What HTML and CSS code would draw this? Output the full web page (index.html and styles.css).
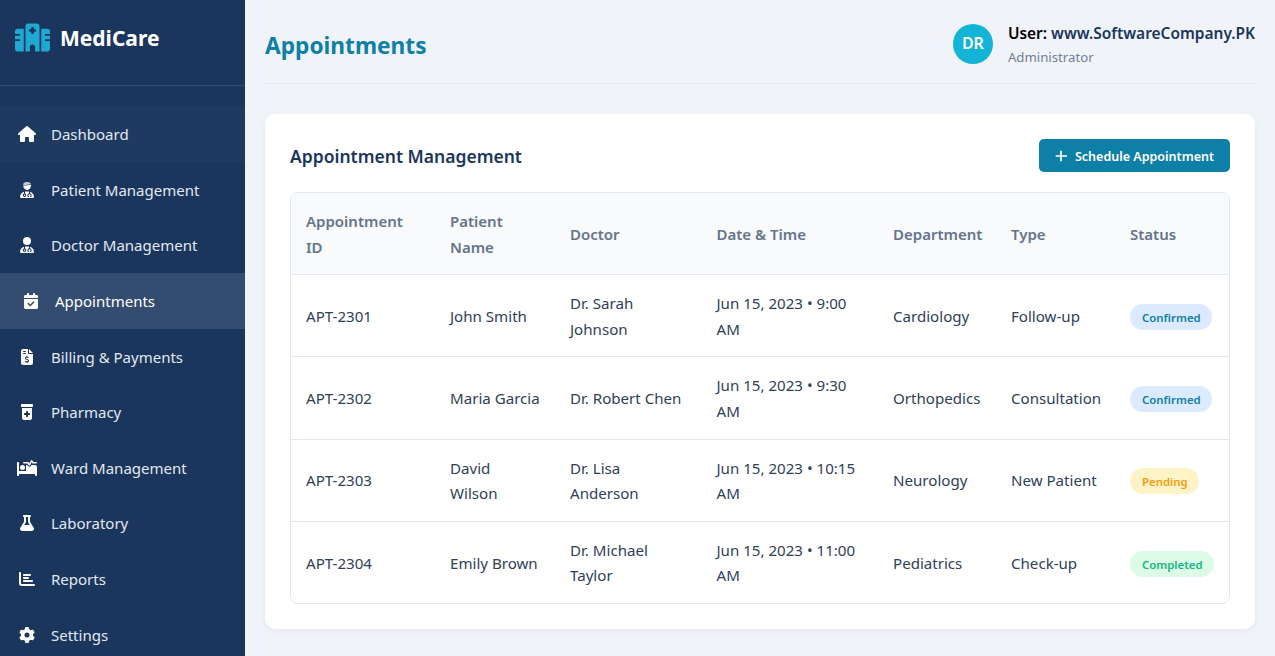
FILE: index.html
```html
<!DOCTYPE html>
<html lang="en">
<head>
<meta charset="utf-8">
<title>MediCare - Appointments</title>
<link rel="stylesheet" href="styles.css">
</head>
<body>
<div class="layout">
<aside class="sidebar">
  <div class="brand">
    <svg class="brand-icon" viewBox="0 0 640 512"><path d="M192 48c0-26.5 21.5-48 48-48H400c26.5 0 48 21.5 48 48V512H368V432c0-26.5-21.5-48-48-48s-48 21.5-48 48v80H192V48zM48 96H160V512H48c-26.5 0-48-21.5-48-48V320H80c8.8 0 16-7.2 16-16s-7.2-16-16-16H0V224H80c8.8 0 16-7.2 16-16s-7.2-16-16-16H0V144c0-26.5 21.5-48 48-48zm544 0c26.5 0 48 21.5 48 48v48H560c-8.8 0-16 7.2-16 16s7.2 16 16 16h80v64H560c-8.8 0-16 7.2-16 16s7.2 16 16 16h80V464c0 26.5-21.5 48-48 48H480V96H592zM312 64c-8.8 0-16 7.2-16 16v24H272c-8.8 0-16 7.2-16 16v16c0 8.8 7.2 16 16 16h24v24c0 8.8 7.2 16 16 16h16c8.8 0 16-7.2 16-16V152h24c8.8 0 16-7.2 16-16V120c0-8.8-7.2-16-16-16H344V80c0-8.8-7.2-16-16-16H312z"/></svg>
    <span class="brand-name">MediCare</span>
  </div>
  <nav class="nav">
    <a class="nav-item hover"><span class="nav-icon"><svg viewBox="0 0 576 512"><path d="M575.8 255.5c0 18-15 32.1-32 32.1h-32l.7 160.2c0 2.7-.2 5.4-.5 8.1V472c0 22.1-17.9 40-40 40H456c-1.1 0-2.2 0-3.3-.1c-1.4 .1-2.8 .1-4.2 .1H416 392c-22.1 0-40-17.9-40-40V448 384c0-17.7-14.3-32-32-32H256c-17.7 0-32 14.3-32 32v64 24c0 22.1-17.9 40-40 40H160 128.1c-1.5 0-3-.1-4.5-.2c-1.2 .1-2.4 .2-3.6 .2H104c-22.1 0-40-17.9-40-40V360c0-.9 0-1.9 .1-2.8V287.6H32c-18 0-32-14-32-32.1c0-9 3-17 10-24L266.4 8c7-7 15-8 22-8s15 2 21 7L564.8 231.5c8 7 12 15 11 24z"/></svg></span>Dashboard</a>
    <a class="nav-item"><span class="nav-icon"><svg viewBox="0 0 448 512"><path opacity=".75" d="M100 70 C110 28 160 0 224 0 C288 0 338 28 348 70 L110 102 Z"/><path d="M100 122 L352 88 C356 180 300 256 224 256 C160 256 108 195 100 122Z"/><path d="M128 311.2C54 332.9 0 401.3 0 482.3C0 498.7 13.3 512 29.7 512H418.3c16.4 0 29.7-13.3 29.7-29.7c0-81-54-149.4-128-171.1V362c27.6 7.1 48 32.2 48 62v40c0 8.8-7.2 16-16 16H336c-8.8 0-16-7.2-16-16s7.2-16 16-16V424c0-17.7-14.3-32-32-32s-32 14.3-32 32v24c8.8 0 16 7.2 16 16s-7.2 16-16 16H256c-8.8 0-16-7.2-16-16V424c0-29.8 20.4-54.9 48-62V304.9c-6-.6-12.1-.9-18.3-.9H178.3c-6.2 0-12.3 .3-18.3 .9v65.4c23.1 6.9 40 28.3 40 53.7c0 30.9-25.1 56-56 56s-56-25.1-56-56c0-25.4 16.9-46.8 40-53.7V311.2zM144 448a24 24 0 1 0 0-48 24 24 0 1 0 0 48z"/></svg></span>Patient Management</a>
    <a class="nav-item"><span class="nav-icon"><svg viewBox="0 0 448 512"><path d="M224 256A128 128 0 1 0 224 0a128 128 0 1 0 0 256zm-96 55.2C54 332.9 0 401.3 0 482.3C0 498.7 13.3 512 29.7 512H418.3c16.4 0 29.7-13.3 29.7-29.7c0-81-54-149.4-128-171.1V362c27.6 7.1 48 32.2 48 62v40c0 8.8-7.2 16-16 16H336c-8.8 0-16-7.2-16-16s7.2-16 16-16V424c0-17.7-14.3-32-32-32s-32 14.3-32 32v24c8.8 0 16 7.2 16 16s-7.2 16-16 16H256c-8.8 0-16-7.2-16-16V424c0-29.8 20.4-54.9 48-62V304.9c-6-.6-12.1-.9-18.3-.9H178.3c-6.2 0-12.3 .3-18.3 .9v65.4c23.1 6.9 40 28.3 40 53.7c0 30.9-25.1 56-56 56s-56-25.1-56-56c0-25.4 16.9-46.8 40-53.7V311.2zM144 448a24 24 0 1 0 0-48 24 24 0 1 0 0 48z"/></svg></span>Doctor Management</a>
    <a class="nav-item active"><span class="nav-icon"><svg viewBox="0 0 448 512"><path d="M128 0c17.7 0 32 14.3 32 32V64H288V32c0-17.7 14.3-32 32-32s32 14.3 32 32V64h48c26.5 0 48 21.5 48 48v48H0V112C0 85.5 21.5 64 48 64H96V32c0-17.7 14.3-32 32-32zM0 192H448V464c0 26.5-21.5 48-48 48H48c-26.5 0-48-21.5-48-48V192zM329 305c9.4-9.4 9.4-24.6 0-33.9s-24.6-9.4-33.9 0l-95 95-47-47c-9.4-9.4-24.6-9.4-33.9 0s-9.4 24.6 0 33.9l64 64c9.4 9.4 24.6 9.4 33.9 0L329 305z"/></svg></span>Appointments</a>
    <a class="nav-item"><span class="nav-icon"><svg viewBox="0 0 384 512"><path d="M64 0C28.7 0 0 28.7 0 64V448c0 35.3 28.7 64 64 64H320c35.3 0 64-28.7 64-64V160H256c-17.7 0-32-14.3-32-32V0H64zM256 0V128H384L256 0zM64 80c0-8.8 7.2-16 16-16h64c8.8 0 16 7.2 16 16s-7.2 16-16 16H80c-8.8 0-16-7.2-16-16zm0 64c0-8.8 7.2-16 16-16h64c8.8 0 16 7.2 16 16s-7.2 16-16 16H80c-8.8 0-16-7.2-16-16zm128 72c8.8 0 16 7.2 16 16v17.3c8.5 1.2 16.7 3.1 24.1 5.1c8.5 2.3 13.6 11 11.3 19.6s-11 13.6-19.6 11.3c-11.1-3-22-5.2-32.1-5.3c-8.4-.1-17.4 1.8-23.6 5.5c-5.7 3.4-8.1 7.3-8.1 12.8c0 3.7 1.3 6.5 7.3 10.1c6.9 4.1 16.6 7.1 29.2 10.9l.5 .1c11.3 3.4 25.3 7.6 36.3 14.6c12.1 7.6 22.4 19.7 22.7 38.2c.3 19.3-9.6 33.3-22.9 41.6c-7.7 4.8-16.4 7.6-25.1 9.1V440c0 8.8-7.2 16-16 16s-16-7.2-16-16V422.2c-11.2-2.1-21.7-5.7-30.9-8.9c-2.1-.7-4.2-1.4-6.2-2.1c-8.4-2.8-12.9-11.9-10.1-20.2s11.9-12.9 20.2-10.1c2.5 .8 4.8 1.6 7.1 2.4c13.6 4.6 24.6 8.4 36.3 8.7c9.1 .3 17.9-1.7 23.7-5.3c5.1-3.2 7.9-7.3 7.8-14.7c-.1-5.6-2.1-9.5-8-13.2c-6.8-4.3-16.5-7.4-29-11.2l-1.6-.5c-11-3.3-24.3-7.3-34.8-13.7c-12-7.2-22.6-18.9-22.7-37.3c-.1-19.4 10.8-32.8 23.8-40.5c7.5-4.4 15.8-7.2 24.1-8.7V232c0-8.8 7.2-16 16-16z"/></svg></span>Billing &amp; Payments</a>
    <a class="nav-item"><span class="nav-icon"><svg viewBox="0 0 384 512"><path d="M0 32C0 14.3 14.3 0 32 0H352c17.7 0 32 14.3 32 32V64c0 17.7-14.3 32-32 32H32C14.3 96 0 81.7 0 64V32zm32 96H352V448c0 35.3-28.7 64-64 64H96c-35.3 0-64-28.7-64-64V128zM160 240v48H112c-8.8 0-16 7.2-16 16v32c0 8.8 7.2 16 16 16h48v48c0 8.8 7.2 16 16 16h32c8.8 0 16-7.2 16-16V352h48c8.8 0 16-7.2 16-16V304c0-8.8-7.2-16-16-16H224V240c0-8.8-7.2-16-16-16H176c-8.8 0-16 7.2-16 16z"/></svg></span>Pharmacy</a>
    <a class="nav-item"><span class="nav-icon"><svg viewBox="0 0 640 512"><path d="M483.2 9.6L524 64h92c13.3 0 24 10.7 24 24s-10.7 24-24 24H512c-7.6 0-14.7-3.6-19.2-9.6L468.7 70.3l-47 99.9c-3.7 7.8-11.3 13.1-19.9 13.7s-16.9-3.4-21.7-10.6L339.2 112H216c-13.3 0-24-10.7-24-24s10.7-24 24-24H352c8 0 15.5 4 20 10.7l24.4 36.6 45.9-97.5C445.9 6.2 453.2 1 461.6 .1s16.6 2.7 21.6 9.5zM320 160h12.7l20.7 31.1c11.2 16.8 30.6 26.3 50.7 24.8s37.9-13.7 46.5-32L461.9 160H480h96c35.3 0 64 28.7 64 64V480c0 17.7-14.3 32-32 32s-32-14.3-32-32V448H352 320 64v32c0 17.7-14.3 32-32 32s-32-14.3-32-32V96C0 78.3 14.3 64 32 64s32 14.3 32 32V352H288V192c0-17.7 14.3-32 32-32zm-144 0a80 80 0 1 1 0 160 80 80 0 1 1 0-160z"/></svg></span>Ward Management</a>
    <a class="nav-item"><span class="nav-icon"><svg viewBox="0 0 448 512"><path d="M288 0H160 128C110.3 0 96 14.3 96 32s14.3 32 32 32V196.8c0 11.8-3.3 23.5-9.5 33.5L10.3 406.2C3.6 417.2 0 429.7 0 442.6C0 480.9 31.1 512 69.4 512H378.6c38.3 0 69.4-31.1 69.4-69.4c0-12.8-3.6-25.4-10.3-36.4L329.5 230.4c-6.2-10.1-9.5-21.7-9.5-33.5V64c17.7 0 32-14.3 32-32s-14.3-32-32-32H288zM192 196.8V64h64V196.8c0 23.7 6.6 46.9 19 67.1L309.5 320h-171L173 263.9c12.4-20.2 19-43.4 19-67.1z"/></svg></span>Laboratory</a>
    <a class="nav-item"><span class="nav-icon"><svg viewBox="0 0 512 512"><path d="M32 32c17.7 0 32 14.3 32 32V400c0 8.8 7.2 16 16 16H480c17.7 0 32 14.3 32 32s-14.3 32-32 32H80c-44.2 0-80-35.8-80-80V64C0 46.3 14.3 32 32 32zm96 96c0-17.7 14.3-32 32-32l192 0c17.7 0 32 14.3 32 32s-14.3 32-32 32l-192 0c-17.7 0-32-14.3-32-32zm32 64H288c17.7 0 32 14.3 32 32s-14.3 32-32 32H160c-17.7 0-32-14.3-32-32s14.3-32 32-32zm0 96H416c17.7 0 32 14.3 32 32s-14.3 32-32 32H160c-17.7 0-32-14.3-32-32s14.3-32 32-32z"/></svg></span>Reports</a>
    <a class="nav-item"><span class="nav-icon"><svg viewBox="0 0 512 512"><path d="M495.9 166.6c3.2 8.7 .5 18.4-6.4 24.6l-43.3 39.4c1.1 8.3 1.7 16.8 1.7 25.4s-.6 17.1-1.7 25.4l43.3 39.4c6.9 6.2 9.6 15.9 6.4 24.6c-4.4 11.9-9.7 23.3-15.8 34.3l-4.7 8.1c-6.6 11-14 21.4-22.1 31.2c-5.9 7.2-15.7 9.6-24.5 6.8l-55.7-17.7c-13.4 10.3-28.2 18.9-44 25.4l-12.5 57.1c-2 9.1-9 16.3-18.2 17.8c-13.8 2.3-28 3.5-42.5 3.5s-28.7-1.2-42.5-3.5c-9.2-1.5-16.2-8.7-18.2-17.8l-12.5-57.1c-15.8-6.5-30.6-15.1-44-25.4L83.1 425.9c-8.8 2.8-18.6 .3-24.5-6.8c-8.1-9.8-15.5-20.2-22.1-31.2l-4.7-8.1c-6.1-11-11.4-22.4-15.8-34.3c-3.2-8.7-.5-18.4 6.4-24.6l43.3-39.4C64.6 273.1 64 264.6 64 256s.6-17.1 1.7-25.4L22.4 191.2c-6.9-6.2-9.6-15.9-6.4-24.6c4.4-11.9 9.7-23.3 15.8-34.3l4.7-8.1c6.6-11 14-21.4 22.1-31.2c5.9-7.2 15.7-9.6 24.5-6.8l55.7 17.7c13.4-10.3 28.2-18.9 44-25.4l12.5-57.1c2-9.1 9-16.3 18.2-17.8C227.3 1.2 241.5 0 256 0s28.7 1.2 42.5 3.5c9.2 1.5 16.2 8.7 18.2 17.8l12.5 57.1c15.8 6.5 30.6 15.1 44 25.4l55.7-17.7c8.8-2.8 18.6-.3 24.5 6.8c8.1 9.8 15.5 20.2 22.1 31.2l4.7 8.1c6.1 11 11.4 22.4 15.8 34.3zM256 336a80 80 0 1 0 0-160 80 80 0 1 0 0 160z"/></svg></span>Settings</a>
  </nav>
</aside>
<main class="main">
  <header class="topbar">
    <h1 class="page-title">Appointments</h1>
    <div class="user">
      <div class="avatar">DR</div>
      <div class="user-info">
        <div class="user-name"><span class="user-label">User:</span> www.SoftwareCompany.PK</div>
        <div class="user-role">Administrator</div>
      </div>
    </div>
  </header>
  <section class="card">
    <div class="card-head">
      <h2 class="card-title">Appointment Management</h2>
      <button class="btn"><svg class="btn-icon" viewBox="0 0 448 512"><path d="M256 80c0-17.7-14.3-32-32-32s-32 14.3-32 32V224H48c-17.7 0-32 14.3-32 32s14.3 32 32 32H192V432c0 17.7 14.3 32 32 32s32-14.3 32-32V288H432c17.7 0 32-14.3 32-32s-14.3-32-32-32H256V80z"/></svg><span class="btn-label">Schedule Appointment</span></button>
    </div>
    <div class="table-wrap">
      <table class="table">
        <thead>
          <tr><th>Appointment ID</th><th>Patient Name</th><th>Doctor</th><th>Date &amp; Time</th><th>Department</th><th>Type</th><th>Status</th></tr>
        </thead>
        <tbody>
          <tr><td>APT-2301</td><td>John Smith</td><td>Dr. Sarah Johnson</td><td>Jun 15, 2023 • 9:00 AM</td><td>Cardiology</td><td>Follow-up</td><td><span class="badge confirmed">Confirmed</span></td></tr>
          <tr><td>APT-2302</td><td>Maria Garcia</td><td>Dr. Robert Chen</td><td>Jun 15, 2023 • 9:30 AM</td><td>Orthopedics</td><td>Consultation</td><td><span class="badge confirmed">Confirmed</span></td></tr>
          <tr><td>APT-2303</td><td>David Wilson</td><td>Dr. Lisa Anderson</td><td>Jun 15, 2023 • 10:15 AM</td><td>Neurology</td><td>New Patient</td><td><span class="badge pending">Pending</span></td></tr>
          <tr><td>APT-2304</td><td>Emily Brown</td><td>Dr. Michael Taylor</td><td>Jun 15, 2023 • 11:00 AM</td><td>Pediatrics</td><td>Check-up</td><td><span class="badge completed">Completed</span></td></tr>
        </tbody>
      </table>
    </div>
  </section>
</main>
</div>
</body>
</html>
```
FILE: styles.css
```css
* { box-sizing: border-box; margin: 0; padding: 0; }
html, body { height: 100%; overflow: hidden; }
body { font-family: "Noto Sans", "Open Sans", sans-serif; background: #f0f4f8; color: #2d3748; font-size: 16px; line-height: 1.6; }
.layout { display: flex; height: 656px; }
.sidebar { width: 245px; flex: none; background: #1a365d; color: #e2e8f0; overflow: hidden; }
.brand { height: 86px; display: flex; align-items: flex-start; gap: 10px; padding: 23px 15px 0; border-bottom: 1px solid rgba(255,255,255,.1); }
.brand-icon { width: 35px; height: 29px; fill: #1fa8d1; flex: none; }
.brand-name { font-size: 21px; font-weight: 700; color: #fff; line-height: 30px; }
.nav { padding-top: 20.2px; display: flex; flex-direction: column; }
.nav-item { height: 55.64px; flex: none; display: flex; align-items: center; padding-left: 18px; font-size: 15px; color: #e2e8f0; }
.nav-item.hover { background: rgba(255,255,255,.025); }
.nav-item.active { background: rgba(255,255,255,.115); padding-left: 22px; color: #fff; }
.nav-icon { width: 18px; height: 18px; margin-right: 15px; flex: none; display: flex; align-items: center; justify-content: center; }
.nav-icon svg { height: 16px; width: auto; flex: none; fill: #fff; }
.main { flex: 1; padding: 0 20px; min-width: 0; }
.topbar { height: 84px; padding-top: 4px; display: flex; align-items: center; justify-content: space-between; border-bottom: 1px solid #e2e8f0; margin-bottom: 30px; }
.page-title { font-size: 22.7px; font-weight: 700; color: #0e7fa6; padding-top: 6px; }
.user { display: flex; align-items: center; gap: 15px; }
.avatar { width: 40px; height: 40px; border-radius: 50%; background: #14b4d8; color: #fff; font-weight: 600; font-size: 16px; display: flex; align-items: center; justify-content: center; }
.user-info { padding-top: 1px; }
.user-name { font-size: 15.46px; font-weight: 600; color: #1a365d; line-height: 24px; }
.user-label { color: #000; }
.user-role { font-size: 13.2px; color: #718096; line-height: 22px; padding-top: 1px; box-sizing: content-box; }
.card { background: #fff; border-radius: 10px; padding: 25px; box-shadow: 0 2px 6px rgba(0,0,0,.05); }
.card-head { display: flex; align-items: center; justify-content: space-between; margin-bottom: 20px; }
.card-title { font-size: 17.5px; font-weight: 600; color: #1a365d; padding-top: 1px; }
.btn { height: 33px; width: 191px; border: 0; border-radius: 5px; background: #0e7fa6; color: #fff; font-family: inherit; font-size: 12.5px; font-weight: 600; display: flex; align-items: center; justify-content: center; gap: 8px; }
.btn-label { padding-top: 2px; }
.btn-icon { width: 12px; height: 14px; fill: #fff; }
.table-wrap { border: 1px solid #e2e8f0; border-radius: 8px; overflow: hidden; }
.table { width: 100%; border-collapse: collapse; table-layout: fixed; font-size: 15.1px; line-height: 25.6px; }
.table th { background: #f8fafc; color: #64748b; font-weight: 600; font-size: 15px; text-align: left; padding: 16px 15px 14px; border-bottom: 1px solid #e2e8f0; }
.table td { padding: 16px 15px 14px; border-bottom: 1px solid #e2e8f0; color: #2f4158; }
.table tbody tr:last-child td { border-bottom: 0; }
.table th:nth-child(1) { width: 144px; }
.table th:nth-child(2) { width: 120px; }
.table th:nth-child(3) { width: 146.5px; }
.table th:nth-child(4) { width: 176.5px; }
.table th:nth-child(5) { width: 118px; }
.table th:nth-child(6) { width: 119px; }
.badge { display: inline-block; padding: 0 11px 0 12px; height: 26px; line-height: 27px; border-radius: 13px; font-size: 11.4px; font-weight: 600; vertical-align: middle; margin-bottom: .4px; }
.confirmed { background: #dbeafe; color: #0e7fa6; }
.pending { background: #fef3c7; color: #f59e0b; }
.completed { background: #dcfce7; color: #10b981; }
```
